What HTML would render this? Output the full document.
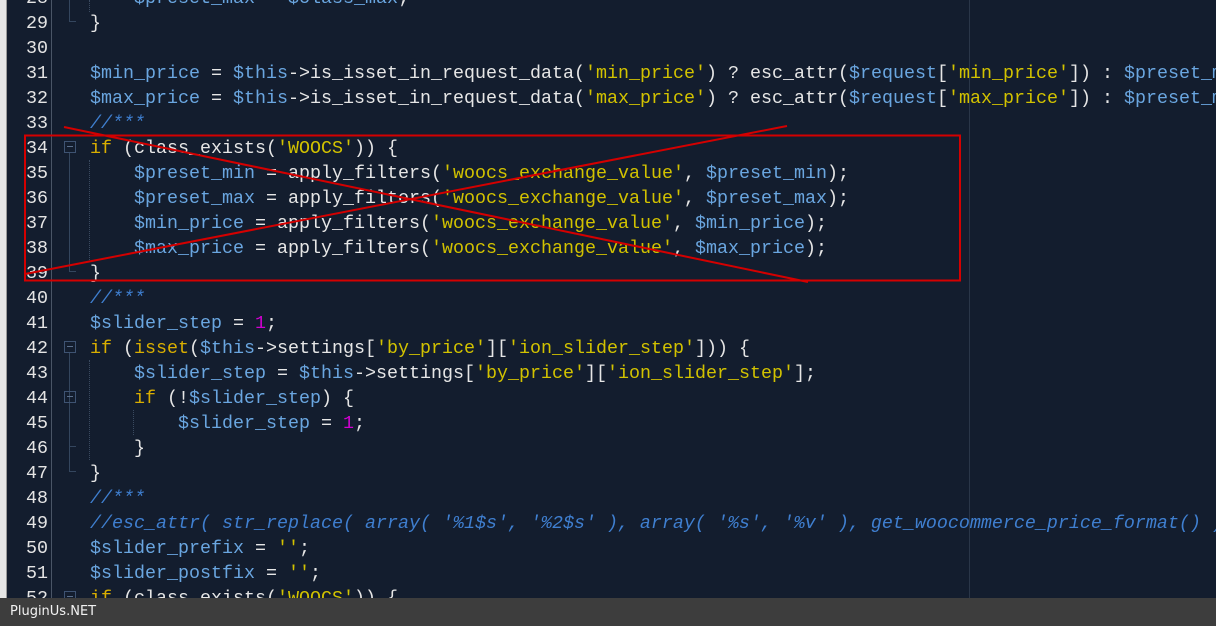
<!DOCTYPE html>
<html><head><meta charset="utf-8"><style>
html,body{margin:0;padding:0}
body{width:1216px;height:626px;overflow:hidden;background:#131d2e;position:relative;font-family:"Liberation Mono","Courier New",monospace;}
.strip{position:absolute;left:0;top:0;width:6px;height:626px;background:#e6e6e6;border-right:1px solid #9a9a9a}
.sep{position:absolute;left:51px;top:0;width:1px;height:626px;background:#4a5566}
.edge{position:absolute;left:969px;top:0;width:1px;height:626px;background:#2a3648}
.ln{position:absolute;left:8px;width:40px;text-align:right;color:#e4e4e4;font-size:18.33px;line-height:25px;height:25px;margin-top:1px}
.c{position:absolute;left:90px;white-space:pre;color:#e6e6e6;font-size:18.33px;line-height:25px;height:25px;margin-top:1px}
.v{color:#6aa6e0}.k{color:#d9ae00}.s{color:#d2c200}.n{color:#d000d0}.cm{color:#3f7fd0;font-style:italic}
.fb{position:absolute;left:64px;width:12px;height:12px;border:1px solid #3e5372;box-sizing:border-box}
.fb:after{content:"";position:absolute;left:2px;top:4px;width:6px;height:1px;background:#5a6f8c}
.fl{position:absolute;left:69px;width:1px;background:#34465e}
.fe{position:absolute;left:69px;width:7px;height:1px;background:#34465e}
.dg{position:absolute;width:0;border-left:1px dotted #3a4a60}
.bar{position:absolute;left:0;top:598px;width:1216px;height:28px;background:#3d3d3d;color:#f2f2f2;font-family:"DejaVu Sans","Liberation Sans",sans-serif;font-size:13px;line-height:28px;padding-left:10px;box-sizing:border-box}
</style></head><body>
<div class="strip"></div><div class="sep"></div><div class="edge"></div>

<div class="ln" style="top:-15.5px">28</div><div class="c" style="top:-15.5px;left:134px"><span class="v">$preset_max</span> = <span class="v">$class_max</span>;</div>
<div class="ln" style="top:9.5px">29</div><div class="c" style="top:9.5px">}</div>
<div class="ln" style="top:34.5px">30</div>
<div class="ln" style="top:59.5px">31</div><div class="c" style="top:59.5px"><span class="v">$min_price</span> = <span class="v">$this</span>-&gt;is_isset_in_request_data(<span class="s">'min_price'</span>) ? esc_attr(<span class="v">$request</span>[<span class="s">'min_price'</span>]) : <span class="v">$preset_min</span>;</div>
<div class="ln" style="top:84.5px">32</div><div class="c" style="top:84.5px"><span class="v">$max_price</span> = <span class="v">$this</span>-&gt;is_isset_in_request_data(<span class="s">'max_price'</span>) ? esc_attr(<span class="v">$request</span>[<span class="s">'max_price'</span>]) : <span class="v">$preset_max</span>;</div>
<div class="ln" style="top:109.5px">33</div><div class="c cm" style="top:109.5px">//***</div>
<div class="ln" style="top:134.5px">34</div><div class="c" style="top:134.5px"><span class="k">if</span> (class_exists(<span class="s">'WOOCS'</span>)) {</div>
<div class="ln" style="top:159.5px">35</div><div class="c" style="top:159.5px;left:134px"><span class="v">$preset_min</span> = apply_filters(<span class="s">'woocs_exchange_value'</span>, <span class="v">$preset_min</span>);</div>
<div class="ln" style="top:184.5px">36</div><div class="c" style="top:184.5px;left:134px"><span class="v">$preset_max</span> = apply_filters(<span class="s">'woocs_exchange_value'</span>, <span class="v">$preset_max</span>);</div>
<div class="ln" style="top:209.5px">37</div><div class="c" style="top:209.5px;left:134px"><span class="v">$min_price</span> = apply_filters(<span class="s">'woocs_exchange_value'</span>, <span class="v">$min_price</span>);</div>
<div class="ln" style="top:234.5px">38</div><div class="c" style="top:234.5px;left:134px"><span class="v">$max_price</span> = apply_filters(<span class="s">'woocs_exchange_value'</span>, <span class="v">$max_price</span>);</div>
<div class="ln" style="top:259.5px">39</div><div class="c" style="top:259.5px">}</div>
<div class="ln" style="top:284.5px">40</div><div class="c cm" style="top:284.5px">//***</div>
<div class="ln" style="top:309.5px">41</div><div class="c" style="top:309.5px"><span class="v">$slider_step</span> = <span class="n">1</span>;</div>
<div class="ln" style="top:334.5px">42</div><div class="c" style="top:334.5px"><span class="k">if</span> (<span class="k">isset</span>(<span class="v">$this</span>-&gt;settings[<span class="s">'by_price'</span>][<span class="s">'ion_slider_step'</span>])) {</div>
<div class="ln" style="top:359.5px">43</div><div class="c" style="top:359.5px;left:134px"><span class="v">$slider_step</span> = <span class="v">$this</span>-&gt;settings[<span class="s">'by_price'</span>][<span class="s">'ion_slider_step'</span>];</div>
<div class="ln" style="top:384.5px">44</div><div class="c" style="top:384.5px;left:134px"><span class="k">if</span> (!<span class="v">$slider_step</span>) {</div>
<div class="ln" style="top:409.5px">45</div><div class="c" style="top:409.5px;left:178px"><span class="v">$slider_step</span> = <span class="n">1</span>;</div>
<div class="ln" style="top:434.5px">46</div><div class="c" style="top:434.5px;left:134px">}</div>
<div class="ln" style="top:459.5px">47</div><div class="c" style="top:459.5px">}</div>
<div class="ln" style="top:484.5px">48</div><div class="c cm" style="top:484.5px">//***</div>
<div class="ln" style="top:509.5px">49</div><div class="c cm" style="top:509.5px">//esc_attr( str_replace( array( '%1$s', '%2$s' ), array( '%s', '%v' ), get_woocommerce_price_format() ) );</div>
<div class="ln" style="top:534.5px">50</div><div class="c" style="top:534.5px"><span class="v">$slider_prefix</span> = <span class="s">''</span>;</div>
<div class="ln" style="top:559.5px">51</div><div class="c" style="top:559.5px"><span class="v">$slider_postfix</span> = <span class="s">''</span>;</div>
<div class="ln" style="top:584.5px">52</div><div class="c" style="top:584.5px"><span class="k">if</span> (class_exists(<span class="s">'WOOCS'</span>)) {</div>

<div class="fl" style="top:0;height:22px"></div><div class="fe" style="top:21px"></div>
<div class="fb" style="top:141px"></div><div class="fl" style="top:153px;height:118px"></div><div class="fe" style="top:271px"></div>
<div class="fb" style="top:341px"></div><div class="fl" style="top:353px;height:118px"></div><div class="fe" style="top:471px"></div>
<div class="fb" style="top:391px"></div><div class="fe" style="top:446px"></div>
<div class="fb" style="top:591px"></div>
<div class="dg" style="left:89px;top:0;height:12px"></div>
<div class="dg" style="left:89px;top:160px;height:100px"></div>
<div class="dg" style="left:89px;top:360px;height:100px"></div>
<div class="dg" style="left:133px;top:410px;height:25px"></div>

<svg style="position:absolute;left:0;top:0" width="1216" height="626">
<rect x="25" y="135.5" width="935" height="145" fill="none" stroke="#d40000" stroke-width="2"/>
<line x1="64" y1="127" x2="808" y2="282" stroke="#d40000" stroke-width="2"/>
<line x1="25" y1="274" x2="787" y2="126" stroke="#d40000" stroke-width="2"/>
</svg>
<div class="bar">PluginUs.NET</div>
</body></html>
